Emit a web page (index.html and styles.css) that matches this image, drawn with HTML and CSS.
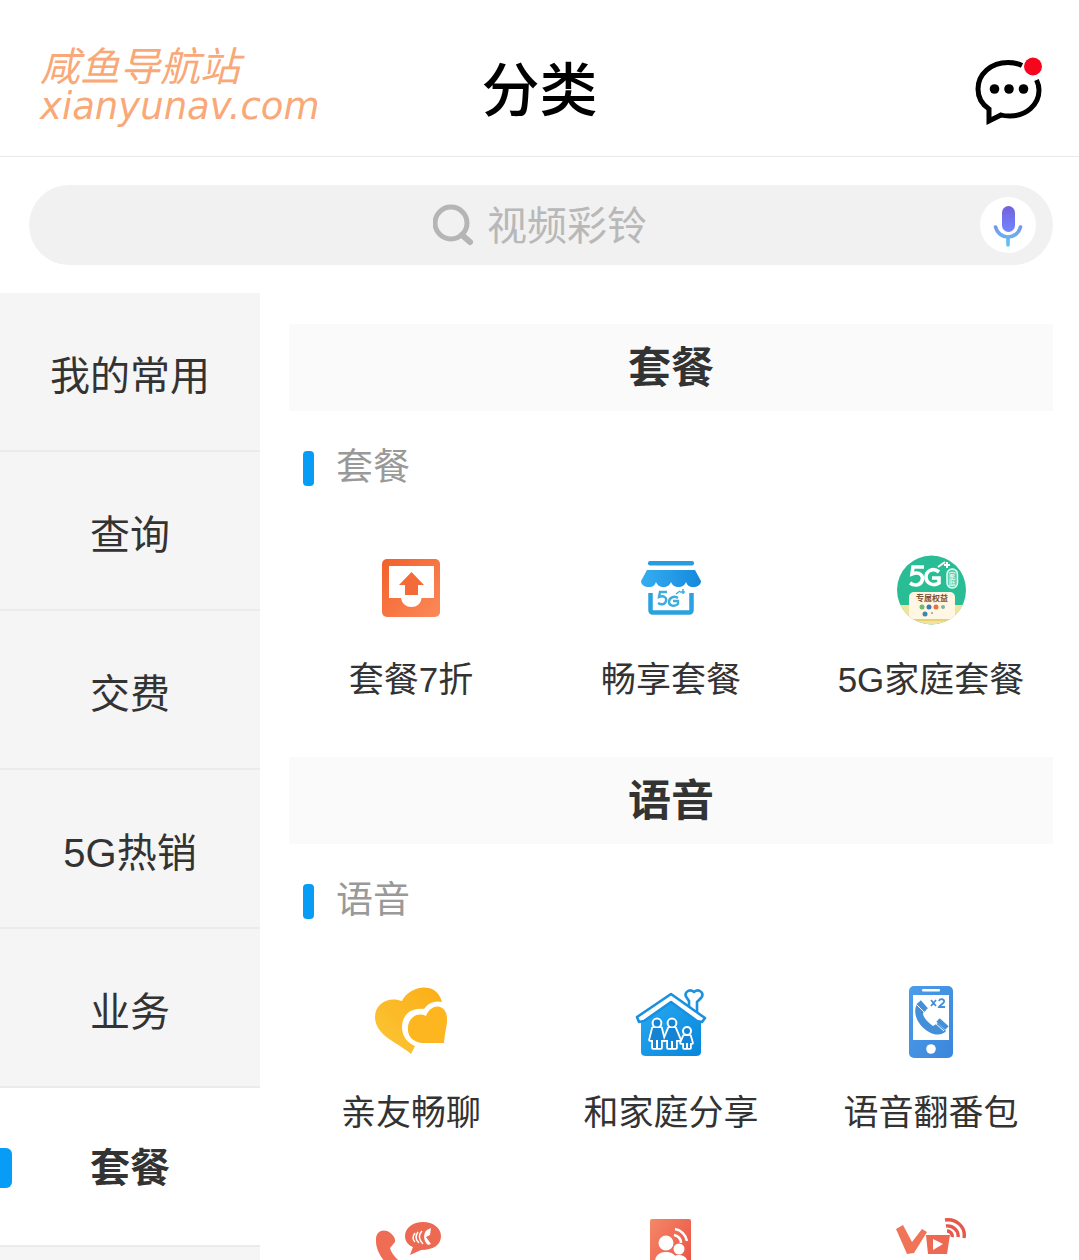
FILE: index.html
```html
<!DOCTYPE html>
<html lang="zh-CN">
<head>
  <meta charset="UTF-8" />
  <meta name="viewport" content="width=device-width, initial-scale=1.0" />
  <title>分类</title>
  <link rel="stylesheet" href="styles.css">
</head>
<body>
  <header class="header">
    <div class="watermark">
      <div>咸鱼导航站</div>
      <div class="watermark-url">xianyunav.com</div>
    </div>
    <h1 class="title">分类</h1>
    <button class="message-btn" type="button" aria-label="消息">
      <svg width="72" height="72" viewBox="0 0 72 72">
        <path d="M50 8.500C45 6 40 5.500 36 5.500C19 5.500 6 17 6 32C6 42 11 48 17 52V64L29 58C32 59 35 59 38 59C54 59 67 48 67 33C67 29 66 26 64.500 23" fill="none" stroke="#000" stroke-width="5" />
        <circle cx="22.500" cy="32" r="4.800" />
        <circle cx="37" cy="32" r="4.800" />
        <circle cx="51.500" cy="32" r="4.800" />
        <circle cx="61" cy="9.500" r="9" fill="#f5061d" />
      </svg>
    </button>
  </header>

  <form class="search">
    <label class="search-field">
      <svg width="42" height="42" viewBox="0 0 42 42" fill="none" stroke="#b5b5b5" stroke-width="5">
        <circle cx="18" cy="19" r="16" />
        <path d="M29 31L37 38" stroke-width="6" stroke-linecap="round" />
      </svg>
      <input class="search-input" type="text" placeholder="视频彩铃" aria-label="搜索">
    </label>
    <button class="voice-btn" type="button" aria-label="语音搜索">
      <svg width="56" height="56" viewBox="0 0 56 56">
        <defs>
          <linearGradient id="mic" x1="0" y1="0" x2="0" y2="1">
            <stop offset="0" stop-color="#7460dc" />
            <stop offset="1" stop-color="#7186ff" />
          </linearGradient>
          <linearGradient id="stand" gradientUnits="userSpaceOnUse" x1="0" y1="28" x2="0" y2="50">
            <stop offset="0" stop-color="#7c91e8" />
            <stop offset="1" stop-color="#5bc9f2" />
          </linearGradient>
        </defs>
        <rect x="22" y="9" width="13" height="26" rx="6.500" fill="url(#mic)" />
        <path d="M15.500 30C17 36 22 40 28 40S39 36 40.500 30M28 40V48" fill="none" stroke="url(#stand)" stroke-width="3.600" stroke-linecap="round" />
      </svg>
    </button>
  </form>

  <main class="main">
    <nav class="sidebar">
      <a class="side-item" href="#">我的常用</a>
      <a class="side-item" href="#">查询</a>
      <a class="side-item" href="#">交费</a>
      <a class="side-item" href="#">5G热销</a>
      <a class="side-item" href="#">业务</a>
      <a class="side-item active" href="#">套餐</a>
      <a class="side-item" href="#"></a>
    </nav>

    <div class="content">
      <section class="section">
        <h2 class="section-title">套餐</h2>
        <h3 class="sub-title">套餐</h3>
        <div class="grid">
          <a class="item" href="#">
            <svg class="icon" viewBox="0 0 72 72">
              <defs>
                <linearGradient id="orange" x1="0" y1="0" x2="1" y2="1">
                  <stop offset="0" stop-color="#f2602a" />
                  <stop offset="1" stop-color="#fb8a5a" />
                </linearGradient>
              </defs>
              <rect x="7" y="6" width="58" height="58" rx="5" fill="url(#orange)" />
              <path d="M14 13H59V45H46.500C46 51 41.500 54 36.500 54S27 51 26 45H14Z" fill="#fff" />
              <path d="M36.500 19L49 32H43V42H30V32H24Z" fill="#f26b38" />
            </svg>
            <span>套餐7折</span>
          </a>
          <a class="item" href="#">
            <svg class="icon" viewBox="0 0 72 72">
              <defs>
                <linearGradient id="awning" x1="0" y1="0" x2="1" y2="0">
                  <stop offset="0" stop-color="#36adf0" />
                  <stop offset="1" stop-color="#1689dd" />
                </linearGradient>
              </defs>
              <rect x="13" y="8" width="46" height="4.500" rx="2" fill="#279ddf" />
              <path d="M12 17H60L66 28C66 32 62 34 58.500 34C54 34 52 32 51 29C50 32 47 34 43.500 34C40 34 37 32 36 29C35 32 32 34 28.500 34C25 34 22 32 21 29C20 32 18 34 14 34C10 34 6 32 6 28Z" fill="url(#awning)" />
              <path d="M15.500 40V57Q15.500 59.500 18 59.500H54Q56.500 59.500 56.500 57V40" fill="none" stroke="#2ba2df" stroke-width="4.500" />
              <g fill="none" stroke="#3caddd" stroke-width="2.400">
                <path d="M32 39H25L24 44C29 42 32 45 31 48C30 52 26 52 23 50" />
                <path d="M43 45C39 42 34 45 34 49C34 53 40 54 43 51V48H38" />
                <path d="M41 41L45 38M45 39H50M48 36V41" stroke-width="1.500" />
              </g>
            </svg>
            <span>畅享套餐</span>
          </a>
          <a class="item" href="#">
            <svg class="icon" viewBox="0 0 72 72">
              <defs>
                <clipPath id="round"><circle cx="36.500" cy="37" r="34.500" /></clipPath>
              </defs>
              <g clip-path="url(#round)">
                <rect width="72" height="72" fill="#28bd94" />
                <path d="M0 52H14L18 49H56L60 52H72V72H0Z" fill="#f0e49c" />
                <rect x="14" y="39" width="46" height="29" rx="5" fill="#fff6e4" />
                <path d="M15 67H59" stroke="#e6cf74" stroke-width="2" />
              </g>
              <g fill="none" stroke="#fff" stroke-width="3.600">
                <path d="M29 14H18L17 21C25 18 29 23 27 28C25 33 19 33 15 30" />
                <path d="M44 19C38 14 31 18 31 24S38 34 44 30V25H37" />
                <path d="M43 14L50 9M49 12H55M52 9V15" stroke-width="2" />
              </g>
              <rect x="52" y="16" width="10.500" height="19" rx="5" fill="#5fd0ac" stroke="#e6fff5" stroke-width="1.500" />
              <text class="icon-badge" x="57" y="25">家</text>
              <text class="icon-badge" x="57" y="32">庭</text>
              <text class="icon-caption" x="37" y="48">专属权益</text>
              <circle cx="27" cy="54" r="2.500" fill="#70ba6a" />
              <circle cx="34" cy="54" r="2.500" fill="#4078b5" />
              <circle cx="41" cy="54" r="2.500" fill="#ea7140" />
              <circle cx="48" cy="54" r="2" fill="#7fb49a" />
              <circle cx="30" cy="61" r="2.500" fill="#3d86ac" />
              <circle cx="37" cy="60" r="1" fill="#89a59a" />
            </svg>
            <span>5G家庭套餐</span>
          </a>
        </div>
      </section>

      <section class="section">
        <h2 class="section-title">语音</h2>
        <h3 class="sub-title">语音</h3>
        <div class="grid">
          <a class="item" href="#">
            <svg class="icon" viewBox="0 0 72 72">
              <defs>
                <linearGradient id="gold" x1="0" y1="1" x2="1" y2="0">
                  <stop offset="0" stop-color="#fcc638" />
                  <stop offset="1" stop-color="#fbae16" />
                </linearGradient>
              </defs>
              <path d="M36 68C24 57 0 50 0 31C0 17 14 10 27 15C34 0 61 -6 67 16C60 14 53 17 49 23C36 21 27 29 27 41C27 51 33 57 40 60Z" fill="url(#gold)" />
              <path d="M69 57H47C38 56 32 50 33 41C34 31 43 26 51 30C55 19 67 17 71 27C74 35 70 43 69 57Z" fill="#fdb520" />
            </svg>
            <span>亲友畅聊</span>
          </a>
          <a class="item" href="#">
            <svg class="icon" viewBox="0 0 72 72">
              <defs>
                <linearGradient id="house" x1="0" y1="0" x2="1" y2="1">
                  <stop offset="0" stop-color="#2aaaf2" />
                  <stop offset="1" stop-color="#0786da" />
                </linearGradient>
              </defs>
              <path d="M54 24V15L52 12C48 7 54 2 59 6C64 2 70 7 66 12L62 16V26Z" fill="#fff" stroke="#1b91df" stroke-width="2.600" stroke-linejoin="round" />
              <path d="M6 37L36 15L66 37V66Q66 70 61 70H11Q6 70 6 66Z" fill="url(#house)" />
              <path d="M2 31L36 8L70 32L67 36L62 35L36 16L9 35L4 36Z" fill="#fff" stroke="#198fe0" stroke-width="2.600" stroke-linejoin="round" />
              <g fill="#fff" stroke="#fff" stroke-width="3.600" stroke-linejoin="round">
                <circle cx="22" cy="37" r="3.600" />
                <circle cx="37" cy="37" r="3.600" />
                <circle cx="52" cy="45" r="3.200" />
                <path d="M18 42H26L29 54H26V62H18V54H15Z" />
                <path d="M34 42H40L45 54H41V62H33V54H29Z" />
                <path d="M49 50H55L57 57H55V62H49V57H46Z" />
              </g>
              <g fill="#1583d4">
                <circle cx="22" cy="37" r="3.400" />
                <circle cx="37" cy="37" r="3.400" />
                <circle cx="52" cy="45" r="3" />
                <path d="M18 42H26L29 54H26V62H23V54H21V62H18V54H15Z" />
                <path d="M34 42H40L45 54H41V62H38V55H36V62H33V54H29Z" />
                <path d="M49 50H55L57 57H55V62H53V57H51V62H49V57H46Z" />
              </g>
            </svg>
            <span>和家庭分享</span>
          </a>
          <a class="item" href="#">
            <svg class="icon" viewBox="0 0 72 72">
              <defs>
                <linearGradient id="phone" x1="0" y1="0" x2="1" y2="1">
                  <stop offset="0" stop-color="#4b9dea" />
                  <stop offset="1" stop-color="#3c86db" />
                </linearGradient>
              </defs>
              <rect x="14" y="0" width="44" height="72" rx="5" fill="url(#phone)" />
              <rect x="27" y="3" width="18" height="2.500" rx="1" fill="#fff" />
              <rect x="18" y="9" width="36" height="45" fill="#fff" />
              <circle cx="36" cy="63" r="4.800" fill="#fff" />
              <path d="M22 18C17 27 23 40 34 46C41 50 48 49 51 45L43 37L38 40C32 36 28 31 28 27L31 24L25 16Z" fill="#438fd8" />
              <path d="M24 16L31 24M43 34L52 42" stroke="#438fd8" stroke-width="5" />
              <path d="M22 19L29 26M40 37L49 45" stroke="#fff" stroke-width="1" />
              <path d="M36 14L41 20M41 14L36 20M44 15C45 12 50 13 49 16C48 18 45 19 44 21H50" fill="none" stroke="#438fd8" stroke-width="1.800" />
            </svg>
            <span>语音翻番包</span>
          </a>
          <a class="item" href="#">
            <svg class="icon" viewBox="0 0 72 72">
              <path d="M1 22C1 15 7 12 12 14C17 16 21 21 20 25L15 31C16 36 20 40 25 45L32 49L39 45L50 55C46 64 38 66 29 60C14 51 0 38 1 22Z" fill="#ef6d54" />
              <path d="M48 5C58 5 66 11 66 19C66 28 58 33 46 33L35 38L38 30C33 28 30 24 30 19C30 11 38 5 48 5Z" fill="#ec6a51" />
              <path d="M52 13L56 11L55 18L51 20L56 27L53 28C48 24 48 16 52 13Z" fill="#fff" />
              <path d="M47 14C43 18 44 23 48 27M43 15C40 19 41 23 44 26M40 16C37 20 38 23 40 25" fill="none" stroke="#fff" stroke-width="1.500" />
            </svg>
          </a>
          <a class="item" href="#">
            <svg class="icon" viewBox="0 0 72 72">
              <defs>
                <linearGradient id="coral" x1="0" y1="0" x2="1" y2="1">
                  <stop offset="0" stop-color="#f48867" />
                  <stop offset="1" stop-color="#e94840" />
                </linearGradient>
              </defs>
              <rect x="15" y="2" width="41" height="68" rx="2" fill="url(#coral)" />
              <g fill="#fff">
                <circle cx="31" cy="26" r="7.500" />
                <path d="M20 45C20 38 25 35 31 35S42 38 42 45Z" />
                <circle cx="44" cy="32" r="5.500" />
                <path d="M34 48C34 41 39 38 44 38S53 41 53 48Z" />
              </g>
              <path d="M40 12C46 13 51 18 52 24M39 18C43 19 46 22 46 26" fill="none" stroke="#fff" stroke-width="2.500" />
            </svg>
          </a>
          <a class="item" href="#">
            <svg class="icon" viewBox="0 0 72 72">
              <path d="M1 12L8 8L17 25L27 12L32 15L19 36L12 37Z" fill="#f07558" />
              <path d="M31 18H55L52 37H33Z" fill="#ed6951" />
              <path d="M38 22L48 27L38 33Z" fill="#fff" />
              <path d="M50 3C61 1 71 10 69 21M51 9C58 8 64 14 63 20M52 14C55 14 58 17 57 20" fill="none" stroke="#e6574c" stroke-width="3.400" />
            </svg>
          </a>
        </div>
      </section>
    </div>
  </main>
</body>
</html>
```

FILE: styles.css
```css
* {
  box-sizing: border-box;
}

body {
  margin: 0;
  height: 100vh;
  display: flex;
  flex-direction: column;
  overflow: hidden;
  background: #fff;
  color: #333;
  font-family: "Liberation Sans", "Noto Sans CJK SC", sans-serif;
}

a {
  color: inherit;
  text-decoration: none;
}

button {
  padding: 0;
  border: none;
  background: none;
  cursor: pointer;
}

svg {
  display: block;
  flex-shrink: 0;
}

h1, h2, h3 {
  margin: 0;
}

.header {
  position: relative;
  display: flex;
  justify-content: center;
  align-items: center;
  flex-shrink: 0;
  height: 157px;
  padding-top: 26px;
  border-bottom: 1px solid #e9e9e9;
}

.title {
  color: #000;
  font-size: 58px;
  font-weight: 500;
  line-height: 80px;
}

.watermark {
  position: absolute;
  top: 47px;
  left: 40px;
  color: #f9a877;
  font-size: 40px;
  font-style: italic;
  line-height: 40px;
}

.watermark-url {
  font-family: "DejaVu Sans", sans-serif;
  font-size: 37px;
}

.message-btn {
  position: absolute;
  top: 57px;
  right: 35px;
}

.search {
  display: flex;
  align-items: center;
  flex-shrink: 0;
  height: 80px;
  margin: 28px 26px 28px 29px;
  padding: 0 17px 0 73px;
  border-radius: 40px;
  background: #f1f1f1;
}

.search-field {
  flex: 1;
  display: flex;
  justify-content: center;
  align-items: center;
  gap: 12px;
}

.search-input {
  width: 162px;
  height: 60px;
  padding: 3px 0 0;
  border: none;
  outline: none;
  background: none;
  color: #333;
  font-family: inherit;
  font-size: 40px;
}

.search-input::placeholder {
  color: #b8b8b8;
}

.voice-btn {
  border-radius: 50%;
  background: #fff;
}

.main {
  flex: 1;
  display: flex;
  min-height: 0;
}

.sidebar {
  flex-shrink: 0;
  width: 260px;
  overflow: hidden;
}

.side-item {
  position: relative;
  display: flex;
  justify-content: center;
  align-items: center;
  height: 159px;
  padding-top: 2px;
  border-bottom: 2px solid #ebebeb;
  background: #f5f5f5;
  font-size: 40px;
}

.side-item.active {
  padding: 0 0 4px;
  background: #fff;
  font-weight: bold;
}

.side-item.active::before {
  content: "";
  position: absolute;
  top: 60px;
  left: 0;
  width: 12px;
  height: 40px;
  border-radius: 0 6px 6px 0;
  background: #079cf5;
}

.content {
  flex: 1;
  overflow: hidden;
  padding: 31px 26px 0 29px;
}

.section {
  margin-bottom: 57px;
}

.section-title {
  height: 87px;
  background: #fafafa;
  font-size: 43px;
  line-height: 89px;
  text-align: center;
}

.sub-title {
  display: flex;
  align-items: center;
  gap: 22px;
  margin: 39px 0 67px 14px;
  color: #999;
  font-size: 37px;
  font-weight: normal;
  line-height: 36px;
}

.sub-title::before {
  content: "";
  width: 11px;
  height: 35px;
  border-radius: 4px;
  background: #079cf5;
}

.grid {
  display: grid;
  grid-template-columns: repeat(3, 1fr);
  row-gap: 84px;
  margin: 0 -8px;
}

.item {
  display: flex;
  flex-direction: column;
  align-items: center;
  gap: 35px;
  font-size: 35px;
  line-height: 40px;
  white-space: nowrap;
}

.icon {
  width: 72px;
  height: 72px;
}

.icon-badge {
  fill: #fff;
  font-size: 7px;
  text-anchor: middle;
}

.icon-caption {
  fill: #7a5038;
  font-size: 8px;
  font-weight: bold;
  text-anchor: middle;
}
```
